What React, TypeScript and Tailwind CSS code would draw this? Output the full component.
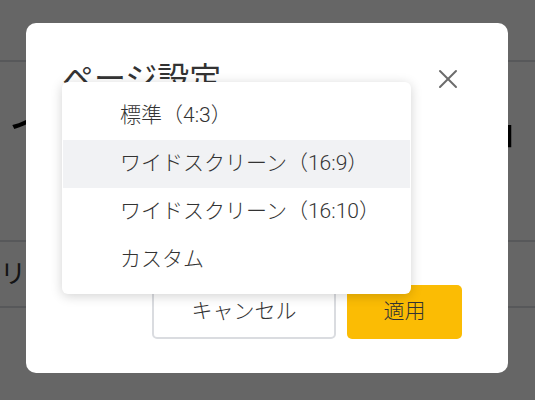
import { X } from 'lucide-react'

const options = ['標準（4:3）', 'ワイドスクリーン（16:9）', 'ワイドスクリーン（16:10）', 'カスタム']

export default function App() {
  const active = 1

  return (
    <div className="relative h-[400px] w-[535px] overflow-hidden bg-white font-['Roboto','Noto_Sans_CJK_JP',sans-serif] text-[#333]">
      {/* Page behind the dialog */}
      <div className="flex flex-col">
        <div className="h-[62px] border-b-2 border-[#dadce0]" />
        <div className="flex h-[178px] items-start justify-between pl-2 pr-[20px] pt-[32px] text-[50px] leading-[64px] text-black">
          <span>イ</span>
          <span>品</span>
        </div>
        <div className="flex h-[68px] items-center border-y-2 border-[#dadce0] text-[26px] text-[#333]">
          <span>リッチ</span>
        </div>
      </div>

      {/* Overlay */}
      <div className="absolute inset-0 flex items-start bg-black/60 pl-[26px] pt-[23px]">
        {/* Dialog */}
        <div className="relative flex h-[350px] w-[482px] flex-col rounded-[10px] bg-white pb-[34px] pl-9 pr-[46px] pt-[34px]">
          <div className="flex items-start justify-between">
            <h2 className="text-[32px] leading-[44px] text-[#333]">ページ設定</h2>
            <button className="mr-[-2px] mt-[6px] text-[#6b6b6b]" aria-label="閉じる">
              <X size={32} strokeWidth={1.5} />
            </button>
          </div>

          <div className="flex-1" />

          <div className="flex justify-end gap-[11px]">
            <button className="h-[54px] w-[184px] rounded-[5px] border-2 border-[#dadce0] bg-white text-[21px] font-light text-[#333]">
              キャンセル
            </button>
            <button className="h-[54px] w-[115px] rounded-[5px] bg-[#fbbc04] text-[21px] font-light text-[#333]">
              適用
            </button>
          </div>

          {/* Open select menu */}
          <ul className="absolute left-9 top-[59px] w-[349px] rounded-[6px] bg-white px-px py-2.5 shadow-[0_2px_12px_rgba(0,0,0,0.18)]">
            {options.map((label, i) => (
              <li
                key={label}
                className={`flex h-12 items-center pl-[57px] text-[21px] font-light text-[#333] ${i === active ? 'bg-[#f1f2f4]' : ''}`}
              >
                {label}
              </li>
            ))}
          </ul>
        </div>
      </div>
    </div>
  )
}
